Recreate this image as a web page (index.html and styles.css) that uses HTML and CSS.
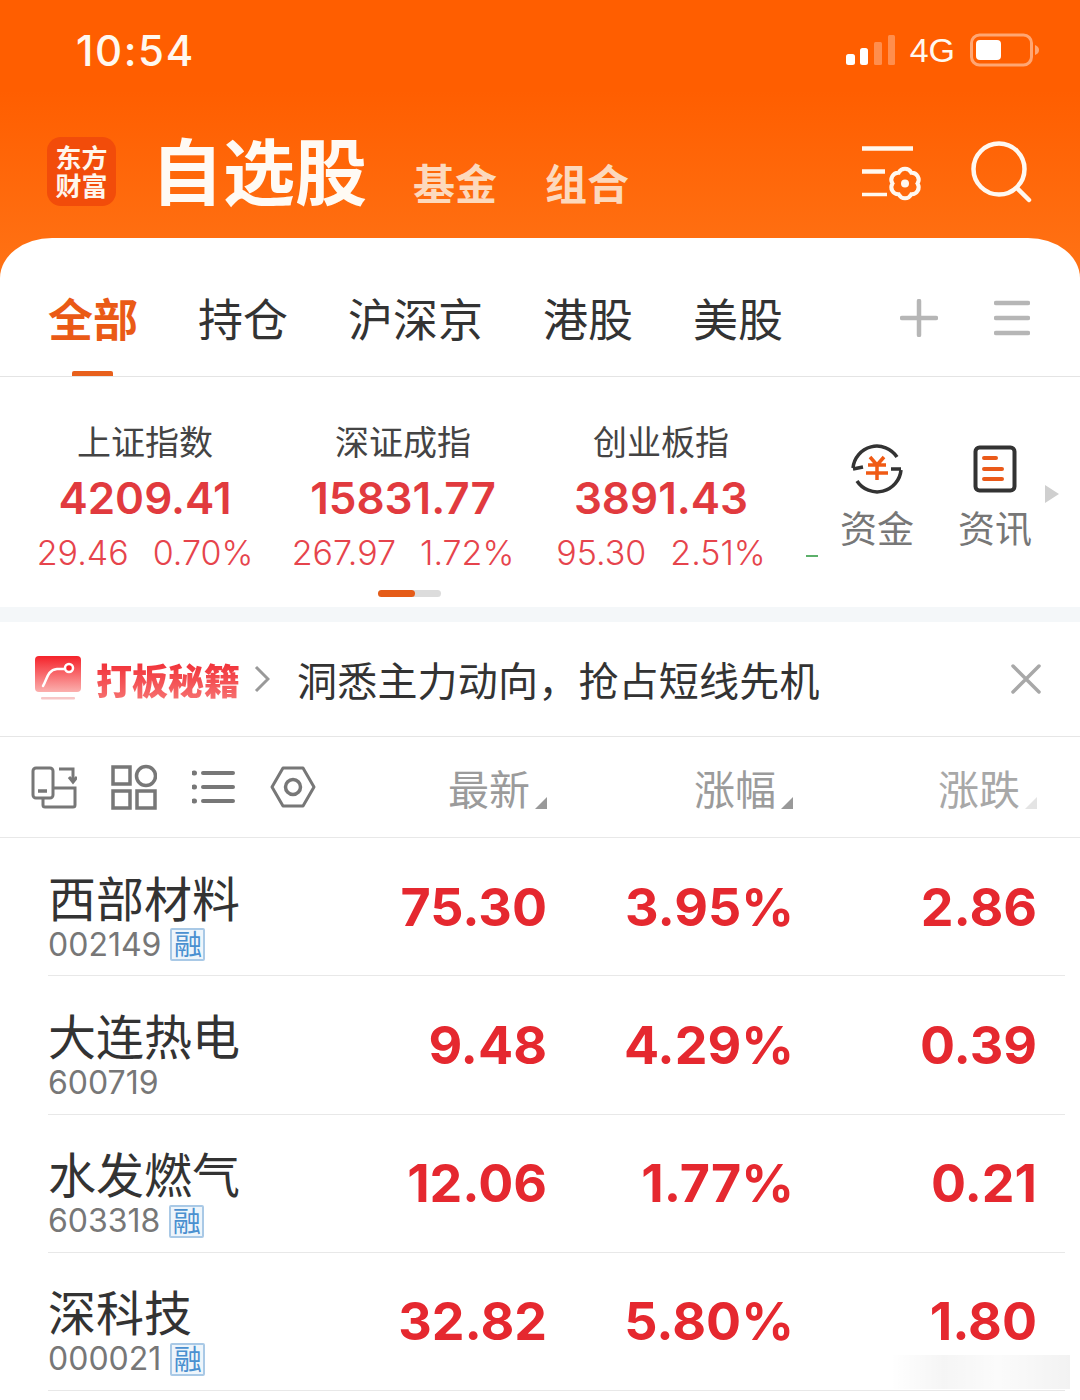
FILE: index.html
```html
<!DOCTYPE html>
<html lang="zh-CN">
<head>
  <meta charset="utf-8">
  <title>自选股</title>
  <link rel="stylesheet" href="styles.css">
</head>
<body>
  <div class="app">
    <div class="status-bar">
      <span class="time">10:54</span>
      <div class="status-right">
        <svg class="signal" width="50" height="32" viewBox="0 0 50 32">
          <rect x="1" y="20" width="9" height="11" rx="2.5" fill="#fff"/>
          <rect x="15" y="14" width="8" height="17" rx="2.5" fill="#fff"/>
          <rect x="29" y="8" width="8" height="23" rx="1.5" fill="#fff" opacity=".3"/>
          <rect x="43" y="1" width="7" height="30" rx="1.5" fill="#fff" opacity=".3"/>
        </svg>
        <span class="net">4G</span>
        <svg width="70" height="34" viewBox="0 0 70 34">
          <rect x="1.5" y="2" width="60" height="30" rx="8" fill="none" stroke="#fff" stroke-opacity=".45" stroke-width="3"/>
          <rect x="6" y="7" width="25" height="20" rx="4" fill="#fff"/>
          <path d="M65 12c3 1 4 3 4 5s-1 4-4 5z" fill="#fff" fill-opacity=".45"/>
        </svg>
      </div>
    </div>

    <div class="top-bar">
      <div class="logo"><span>东方</span><span>财富</span></div>
      <span class="page-title">自选股</span>
      <span class="page-link first">基金</span>
      <span class="page-link">组合</span>
      <div class="top-icons">
        <svg width="62" height="58" viewBox="0 0 62 58" fill="none" stroke="#fff8f0">
          <path d="M1 5.500h51M1 28.500h23" stroke-width="4.500"/>
          <path d="M1 51.500h25" stroke-width="3.500"/>
          <path d="M50.250 29.700A7 7 0 0 1 56.500 40.500A7 7 0 0 1 50.250 51.300A7 7 0 0 1 37.750 51.300A7 7 0 0 1 31.500 40.500A7 7 0 0 1 37.750 29.700A7 7 0 0 1 50.250 29.700z" stroke-width="4"/>
          <circle cx="44" cy="40.500" r="4" fill="#fff8f0" stroke="none"/>
        </svg>
        <svg width="62" height="62" viewBox="0 0 62 62" fill="none" stroke="#fff8f0" stroke-width="4.500" stroke-linecap="round">
          <circle cx="28" cy="28" r="25.500"/>
          <path d="M46 47l12 12"/>
        </svg>
      </div>
    </div>

    <div class="sheet">
      <div class="tabs">
        <span class="tab active">全部</span>
        <span class="tab">持仓</span>
        <span class="tab">沪深京</span>
        <span class="tab">港股</span>
        <span class="tab">美股</span>
        <div class="tab-tools">
          <svg width="38" height="38" viewBox="0 0 38 38" stroke="#b6b6b6" stroke-width="4.500" stroke-linecap="round">
            <path d="M19 2v34M2 19h34"/>
          </svg>
          <svg width="36" height="36" viewBox="0 0 36 36" stroke="#b6b6b6" stroke-width="4.500" stroke-linecap="round">
            <path d="M2 3h32M2 18h32M2 33h32"/>
          </svg>
        </div>
      </div>

      <div class="market">
        <div class="market-left">
          <div class="indexes">
            <div class="index">
              <div class="index-name">上证指数</div>
              <div class="index-value">4209.41</div>
              <div class="index-change"><span>29.46</span><span>0.70%</span></div>
            </div>
            <div class="index">
              <div class="index-name">深证成指</div>
              <div class="index-value">15831.77</div>
              <div class="index-change"><span>267.97</span><span>1.72%</span></div>
            </div>
            <div class="index">
              <div class="index-name">创业板指</div>
              <div class="index-value">3891.43</div>
              <div class="index-change"><span>95.30</span><span>2.51%</span></div>
            </div>
          </div>
          <div class="pager"><span></span></div>
        </div>
        <span class="cut-dash"></span>
        <div class="shortcut">
          <svg width="52" height="52" viewBox="0 0 52 52" fill="none">
            <path d="M2 25a24 24 0 0 1 44-11M50 27a24 24 0 0 1-44 11" stroke="#333" stroke-width="3.500"/>
            <path d="M2 26l10-2M40 26h10" stroke="#333" stroke-width="3.500"/>
            <path d="M19 14l7 8 7-8M17 22h18M15 30h22M26 22v15" stroke="#f05a14" stroke-width="3.500"/>
          </svg>
          <span>资金</span>
        </div>
        <div class="shortcut">
          <svg width="44" height="48" viewBox="0 0 44 48" fill="none">
            <rect x="2.500" y="2.500" width="39" height="43" rx="4" stroke="#333" stroke-width="4"/>
            <path d="M11 13h12M11 24h18M11 34h18" stroke="#ea5a1a" stroke-width="4" stroke-linecap="round"/>
          </svg>
          <span>资讯</span>
        </div>
        <span class="more-arrow"></span>
      </div>

      <div class="gap"></div>

      <div class="banner">
        <svg width="46" height="46" viewBox="0 0 46 46">
          <defs>
            <linearGradient id="bannerRed" x1="0" y1="0" x2="0" y2="1">
              <stop offset="0" stop-color="#f5222a"/>
              <stop offset="1" stop-color="#fbb0ae"/>
            </linearGradient>
          </defs>
          <rect x="0" y="0" width="46" height="36" rx="4" fill="url(#bannerRed)"/>
          <rect x="6" y="41" width="34" height="2.500" rx="1" fill="#f7c6c6"/>
          <path d="M8 30c4-6 4-16 14-17h12" fill="none" stroke="#fff" stroke-width="2.500" stroke-linecap="round"/>
          <circle cx="34" cy="12" r="4" fill="#f5222a" stroke="#fff" stroke-width="2.500"/>
        </svg>
        <span class="banner-tag">打板秘籍</span>
        <svg class="banner-chevron" width="16" height="28" viewBox="0 0 16 28" fill="none" stroke="#999" stroke-width="3">
          <path d="M2 2l12 12L2 26"/>
        </svg>
        <span class="banner-text">洞悉主力动向，抢占短线先机</span>
        <svg class="banner-close" width="30" height="30" viewBox="0 0 30 30" stroke="#a8a8a8" stroke-width="3.500" stroke-linecap="round">
          <path d="M2 2l26 26M28 2L2 28"/>
        </svg>
      </div>

      <div class="list-head">
        <div class="list-tools">
          <svg width="46" height="44" viewBox="0 0 46 44" fill="none" stroke="#777" stroke-width="3">
            <rect x="2" y="3" width="20" height="30" rx="3"/>
            <path d="M7 26h9" stroke-width="3.500"/>
            <path d="M28 4h14v12M38 12l4 5 4-5M22 23h22v17a2 2 0 0 1-2 2H14a2 2 0 0 1-2-2v-7"/>
          </svg>
          <svg width="46" height="46" viewBox="0 0 46 46" fill="none" stroke="#777" stroke-width="3.500">
            <rect x="2" y="3" width="17" height="17"/>
            <circle cx="35" cy="12" r="9.500"/>
            <rect x="2" y="27" width="17" height="17"/>
            <rect x="26" y="27" width="18" height="17"/>
          </svg>
          <svg width="43" height="36" viewBox="0 0 43 36" fill="none" stroke="#777" stroke-width="4" stroke-linecap="round">
            <path d="M11 4h30M11 18h30M11 32h30"/>
            <path d="M2 4h.5M2 18h.5M2 32h.5" stroke-width="5"/>
          </svg>
          <svg width="46" height="42" viewBox="0 0 46 42" fill="none" stroke="#777" stroke-width="3">
            <path d="M13 2h20l11 19-11 19H13L2 21z" stroke-linejoin="round"/>
            <circle cx="23" cy="21" r="7.500" stroke-width="3.500"/>
          </svg>
        </div>
        <span class="col-title">最新<i class="sort"></i></span>
        <span class="col-title">涨幅<i class="sort"></i></span>
        <span class="col-title faded">涨跌<i class="sort"></i></span>
      </div>

      <div class="stock">
        <div class="stock-info">
          <div class="stock-name">西部材料</div>
          <div class="stock-code">002149<span class="rong">融</span></div>
        </div>
        <span class="num">75.30</span>
        <span class="num">3.95%</span>
        <span class="num">2.86</span>
      </div>
      <div class="stock">
        <div class="stock-info">
          <div class="stock-name">大连热电</div>
          <div class="stock-code">600719</div>
        </div>
        <span class="num">9.48</span>
        <span class="num">4.29%</span>
        <span class="num">0.39</span>
      </div>
      <div class="stock">
        <div class="stock-info">
          <div class="stock-name">水发燃气</div>
          <div class="stock-code">603318<span class="rong">融</span></div>
        </div>
        <span class="num">12.06</span>
        <span class="num">1.77%</span>
        <span class="num">0.21</span>
      </div>
      <div class="stock">
        <div class="stock-info">
          <div class="stock-name">深科技</div>
          <div class="stock-code">000021<span class="rong">融</span></div>
        </div>
        <span class="num">32.82</span>
        <span class="num">5.80%</span>
        <span class="num">1.80</span>
      </div>
    </div>
    <div class="watermark"></div>
  </div>
</body>
</html>
```

FILE: styles.css
```css
* {
  box-sizing: border-box;
}

html, body {
  margin: 0;
  height: 1400px;
  overflow: hidden;
  background: #fff;
}

body {
  font-family: "Noto Sans CJK SC", "Noto Sans", sans-serif;
  color: #333;
}

.app {
  position: relative;
  width: 1080px;
  height: 1400px;
  background: linear-gradient(180deg, #ff5e00 0, #ff5e00 90px, #ff7417 290px) no-repeat;
  background-size: 100% 300px;
}

/* status bar */
.status-bar {
  display: flex;
  justify-content: space-between;
  align-items: center;
  height: 100px;
  padding: 0 40px 0 76px;
}

.time {
  font-family: Inter, sans-serif;
  font-size: 42px;
  font-weight: 500;
  letter-spacing: 1.600px;
  color: #fff8f0;
}

.status-right {
  display: flex;
  align-items: center;
  gap: 15px;
}

.net {
  font-family: "Liberation Sans", sans-serif;
  font-size: 34px;
  color: #fff8f0;
}

/* top bar */
.top-bar {
  display: flex;
  align-items: center;
  height: 138px;
  padding: 5px 50px 0 47px;
}

.logo {
  display: flex;
  flex-direction: column;
  align-items: center;
  justify-content: center;
  width: 69px;
  height: 69px;
  margin-bottom: 1px;
  border-radius: 14px;
  background: #f24c0a;
  color: #fff6ec;
  font-size: 26px;
  font-weight: 700;
  line-height: 28px;
}

.page-title {
  margin-left: 35px;
  margin-bottom: 8px;
  font-size: 72px;
  font-weight: 700;
  line-height: 80px;
  color: #fffaf4;
}

.page-link {
  margin-left: 48px;
  margin-top: 21px;
  font-size: 42px;
  font-weight: 700;
  line-height: 60px;
  color: #fcd9bd;
}

.page-link.first {
  margin-left: 46px;
}

.top-icons {
  display: flex;
  align-items: center;
  gap: 48px;
  margin-left: auto;
  margin-right: -3px;
}

/* white sheet */
.sheet {
  border-radius: 52px 52px 0 0 / 40px 40px 0 0;
  background: #fff;
}

.tabs {
  display: flex;
  gap: 60px;
  height: 139px;
  padding: 46px 50px 0 48px;
  border-bottom: 1px solid #e4e4e4;
}

.tab {
  position: relative;
  height: 67px;
  font-size: 45px;
  line-height: 67px;
  color: #333;
}

.tab.active {
  color: #ea5a16;
  font-weight: 700;
}

.tab.active::after {
  content: "";
  position: absolute;
  left: 24px;
  bottom: -25px;
  width: 41px;
  height: 5px;
  border-radius: 2px 2px 0 0;
  background: #e8601c;
}

.tab-tools {
  display: flex;
  align-items: center;
  gap: 56px;
  height: 67px;
  margin-left: auto;
}

/* market summary */
.market {
  position: relative;
  display: flex;
  height: 230px;
}

.market-left {
  width: 790px;
  margin-left: 16px;
}

.indexes {
  display: flex;
  padding-top: 39px;
}

.index {
  width: 258px;
  text-align: center;
}

.index-name {
  font-size: 34px;
  line-height: 50px;
  color: #444;
}

.index-value {
  margin-top: 1px;
  font-family: Inter, sans-serif;
  font-size: 44px;
  font-weight: 600;
  line-height: 62px;
  color: #e13a3e;
}

.index-change {
  display: flex;
  justify-content: center;
  gap: 24px;
  margin-top: -1px;
  font-family: Inter, sans-serif;
  font-size: 34px;
  font-weight: 300;
  line-height: 50px;
  color: #e6444c;
}

.pager {
  width: 63px;
  height: 7px;
  margin: 12px 0 0 362px;
  border-radius: 4px;
  background: #dcdcdc;
}

.pager span {
  display: block;
  width: 37px;
  height: 7px;
  border-radius: 4px;
  background: #e55c18;
}

.cut-dash {
  width: 12px;
  height: 2px;
  margin-top: 178px;
  background: #5cb06a;
}

.shortcut {
  display: flex;
  flex-direction: column;
  align-items: center;
  gap: 4px;
  width: 118px;
  padding-top: 66px;
  font-size: 37px;
  line-height: 56px;
  color: #777;
}

.shortcut svg {
  height: 52px;
}

.more-arrow {
  width: 0;
  height: 0;
  margin: 108px 0 0 -9px;
  border-left: 14px solid #cfcfcf;
  border-top: 9px solid transparent;
  border-bottom: 9px solid transparent;
}

.gap {
  height: 15px;
  background: #f4f7f9;
}

/* notice banner */
.banner {
  display: flex;
  align-items: center;
  height: 115px;
  padding: 0 39px 0 35px;
  border-bottom: 1px solid #e6e6e6;
}

.banner-tag {
  margin-left: 15px;
  font-size: 36px;
  font-weight: 900;
  background: linear-gradient(180deg, #f0202a, #f77a78);
  -webkit-background-clip: text;
  background-clip: text;
  color: transparent;
}

.banner-chevron {
  margin-left: 14px;
}

.banner-text {
  margin-left: 27px;
  font-size: 40px;
  letter-spacing: .2px;
  color: #333;
}

.banner-close {
  margin-left: auto;
}

/* list header */
.list-head {
  display: grid;
  grid-template-columns: 1fr 200px 246px 244px;
  align-items: center;
  height: 101px;
  padding: 0 43px 0 31px;
  border-bottom: 1px solid #e8e8e8;
}

.list-tools {
  display: flex;
  align-items: center;
  gap: 34px;
}

.list-tools svg:nth-child(3) {
  margin-left: 1px;
  margin-right: 1px;
}

.col-title {
  justify-self: end;
  display: flex;
  align-items: flex-end;
  font-size: 41px;
  line-height: 56px;
  color: #9b9b9b;
}

.col-title.faded {
  color: #a8a8a8;
}

.sort {
  width: 0;
  height: 0;
  margin: 0 0 6px 5px;
  border-left: 12px solid transparent;
  border-bottom: 12px solid #999;
}

.faded .sort {
  border-bottom-color: #e4e4e4;
}

/* stock rows */
.stock {
  display: grid;
  grid-template-columns: 1fr 200px 247px 243px;
  align-items: center;
  height: 138.250px;
  margin: 0 15px 0 48px;
  padding-right: 28px;
  border-bottom: 1px solid #e8e8e8;
}

.stock-info {
  padding-top: 14px;
}

.stock-name {
  font-size: 48px;
  line-height: 60px;
  color: #333;
}

.stock-code {
  display: flex;
  align-items: center;
  margin-top: 2px;
  font-family: Inter, sans-serif;
  font-size: 32px;
  line-height: 34px;
  color: #777;
}

.rong {
  display: inline-block;
  width: 35px;
  height: 33px;
  margin-left: 9px;
  border: 2px solid #a9c9e6;
  border-radius: 2px;
  background: #eef5fb;
  font-family: "Noto Sans CJK SC", sans-serif;
  font-size: 28px;
  line-height: 27px;
  text-align: center;
  color: #4a90d0;
}

.num {
  justify-self: end;
  margin-top: 1px;
  font-family: Inter, sans-serif;
  font-size: 52px;
  font-weight: 700;
  color: #e5282f;
}

/* faint watermark from the original picture */
.watermark {
  position: absolute;
  right: 10px;
  top: 1355px;
  width: 180px;
  height: 34px;
  background: linear-gradient(90deg, rgba(0,0,0,0), rgba(0,0,0,.04) 30%, rgba(0,0,0,.015) 60%, rgba(0,0,0,.05));
  pointer-events: none;
}
```
